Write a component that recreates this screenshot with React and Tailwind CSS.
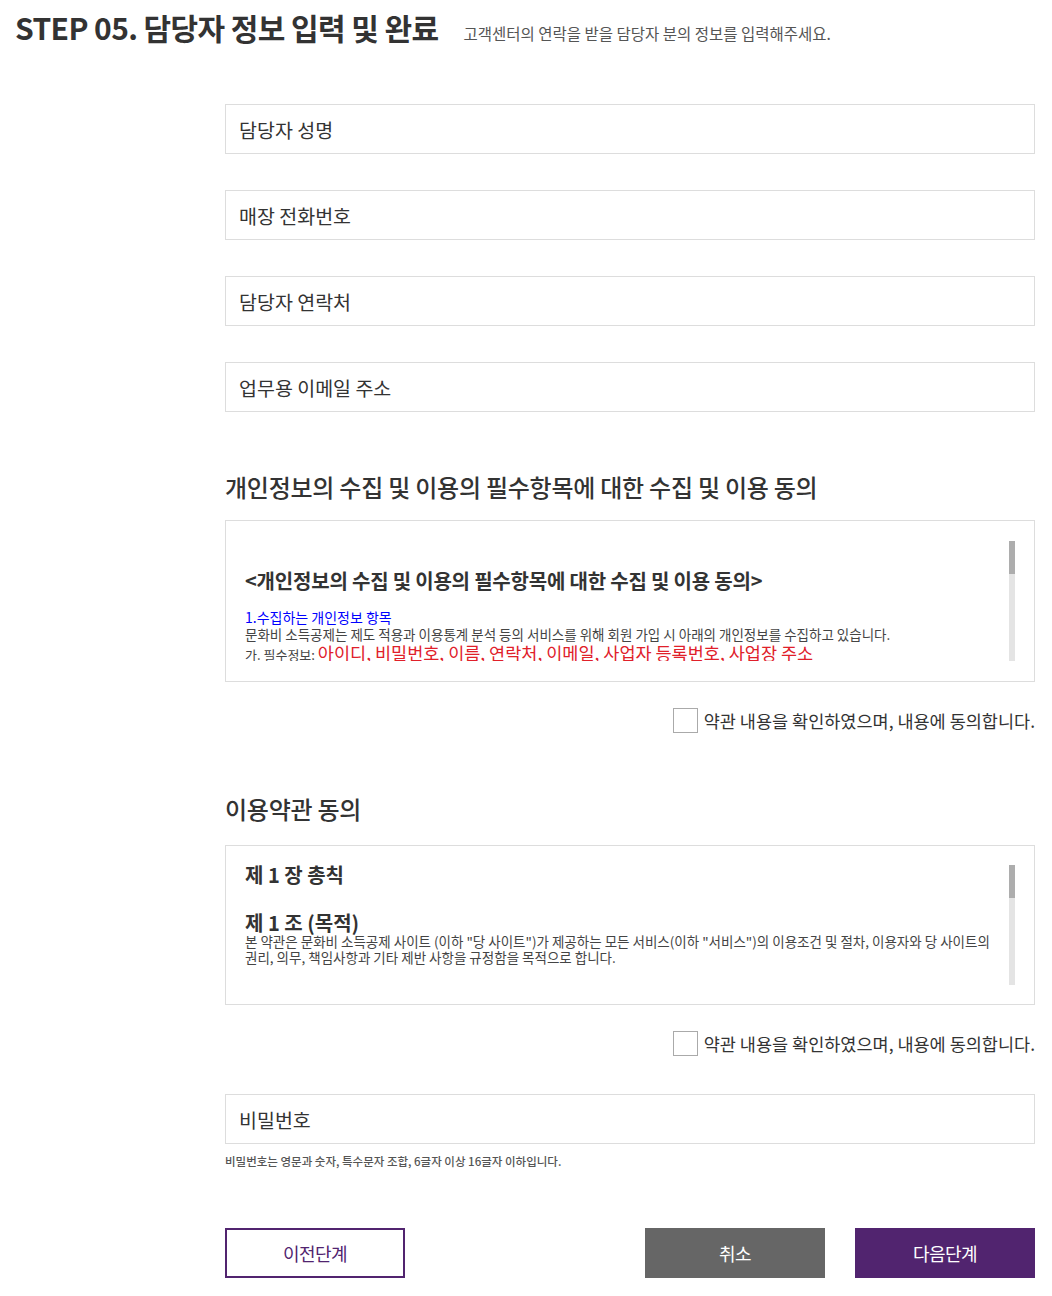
import React from "react";

const font = { fontFamily: '"Noto Sans CJK KR", "Noto Sans", sans-serif' };

function Field({ placeholder, type = "text" }) {
  return (
    <input
      type={type}
      placeholder={placeholder}
      className="h-[50px] w-full border border-[#dddddd] px-[13px] text-[19.5px] text-[#333] outline-none placeholder:text-[#333]"
    />
  );
}

function Agree() {
  return (
    <label className="flex items-center justify-end gap-[6px]">
      <span className="h-[25px] w-[25px] border border-[#aaaaaa] bg-white" />
      <span className="text-[17.5px] leading-[25px] text-[#333]">
        약관 내용을 확인하였으며, 내용에 동의합니다.
      </span>
    </label>
  );
}

function ScrollBox({ children, className }) {
  return (
    <div className={`flex h-[120px] ${className}`}>
      <div className="min-w-0 flex-1 overflow-hidden pr-[6px] break-keep">{children}</div>
      <div className="flex h-[120px] w-[6px] flex-col bg-[#e4e4e4]">
        <div className="h-[33px] w-[6px] bg-[#adadad]" />
      </div>
    </div>
  );
}

export default function App() {
  return (
    <div style={font} className="w-[1052px] bg-white text-[#333]">
      <div className="flex items-baseline pl-[15px] pt-[7px]">
        <h1 className="text-[30px] font-bold leading-[40px] tracking-[-0.02em] text-[#333]">
          STEP 05. 담당자 정보 입력 및 완료
        </h1>
        <p className="ml-[25px] text-[15.5px] text-[#555]">
          고객센터의 연락을 받을 담당자 분의 정보를 입력해주세요.
        </p>
      </div>

      <div className="ml-[225px] mr-[17px] pb-[18px]">
        <div className="mt-[57px] flex flex-col gap-[36px]">
          <Field placeholder="담당자 성명" />
          <Field placeholder="매장 전화번호" />
          <Field placeholder="담당자 연락처" />
          <Field placeholder="업무용 이메일 주소" />
        </div>

        <h2 className="mt-[59px] text-[24px] font-medium leading-[32px] tracking-[-0.01em] text-[#333]">
          개인정보의 수집 및 이용의 필수항목에 대한 수집 및 이용 동의
        </h2>
        <div className="mt-[17px] h-[162px] border border-[#dddddd] py-[20px] pl-[19px] pr-[19px]">
          <ScrollBox>
            <h3 className="mt-[26px] text-[20px] font-bold leading-[28px] tracking-[-0.01em] text-[#333]">
              &lt;개인정보의 수집 및 이용의 필수항목에 대한 수집 및 이용 동의&gt;
            </h3>
            <p className="mt-[13px] text-[14px] leading-[18px] text-[#0000ff]">
              1.수집하는 개인정보 항목
            </p>
            <p className="text-[13.5px] leading-[17px] text-[#444]">
              문화비 소득공제는 제도 적용과 이용통계 분석 등의 서비스를 위해 회원 가입 시 아래의 개인정보를 수집하고 있습니다.
            </p>
            <p className="text-[13px] leading-[20px] text-[#444]">
              가. 필수정보: <span className="text-[17.5px] text-[#e0202a]">아이디, 비밀번호, 이름, 연락처, 이메일, 사업자 등록번호, 사업장 주소</span>
            </p>
          </ScrollBox>
        </div>
        <div className="mt-[26px]">
          <Agree />
        </div>

        <h2 className="mt-[60px] text-[24px] font-medium leading-[32px] tracking-[-0.01em] text-[#333]">
          이용약관 동의
        </h2>
        <div className="mt-[20px] h-[160px] border border-[#dddddd] py-[19px] pl-[19px] pr-[19px]">
          <ScrollBox>
            <h3 className="text-[20px] font-bold leading-[20px] text-[#333]">
              제 1 장 총칙
            </h3>
            <h3 className="mt-[28px] text-[20px] font-bold leading-[20px] text-[#333]">
              제 1 조 (목적)
            </h3>
            <p className="text-[13.5px] leading-[16px] text-[#444]">
              본 약관은 문화비 소득공제 사이트 (이하 "당 사이트")가 제공하는 모든 서비스(이하 "서비스")의 이용조건 및 절차, 이용자와 당 사이트의 권리, 의무, 책임사항과 기타 제반 사항을 규정함을 목적으로 합니다.
            </p>
          </ScrollBox>
        </div>
        <div className="mt-[26px]">
          <Agree />
        </div>

        <div className="mt-[38px]">
          <Field placeholder="비밀번호" type="password" />
        </div>
        <p className="mt-[10px] text-[11.5px] font-medium leading-[14px] text-[#555]">
          비밀번호는 영문과 숫자, 특수문자 조합, 6글자 이상 16글자 이하입니다.
        </p>

        <div className="mt-[60px] flex items-center">
          <button className="h-[50px] w-[180px] border-2 border-[#51246f] bg-white text-[18px] tracking-[-0.03em] text-[#51246f]">
            이전단계
          </button>
          <button className="ml-auto h-[50px] w-[180px] bg-[#666666] text-[18px] tracking-[-0.03em] text-white">
            취소
          </button>
          <button className="ml-[30px] h-[50px] w-[180px] bg-[#51246f] text-[18px] tracking-[-0.03em] text-white">
            다음단계
          </button>
        </div>
      </div>
    </div>
  );
}
